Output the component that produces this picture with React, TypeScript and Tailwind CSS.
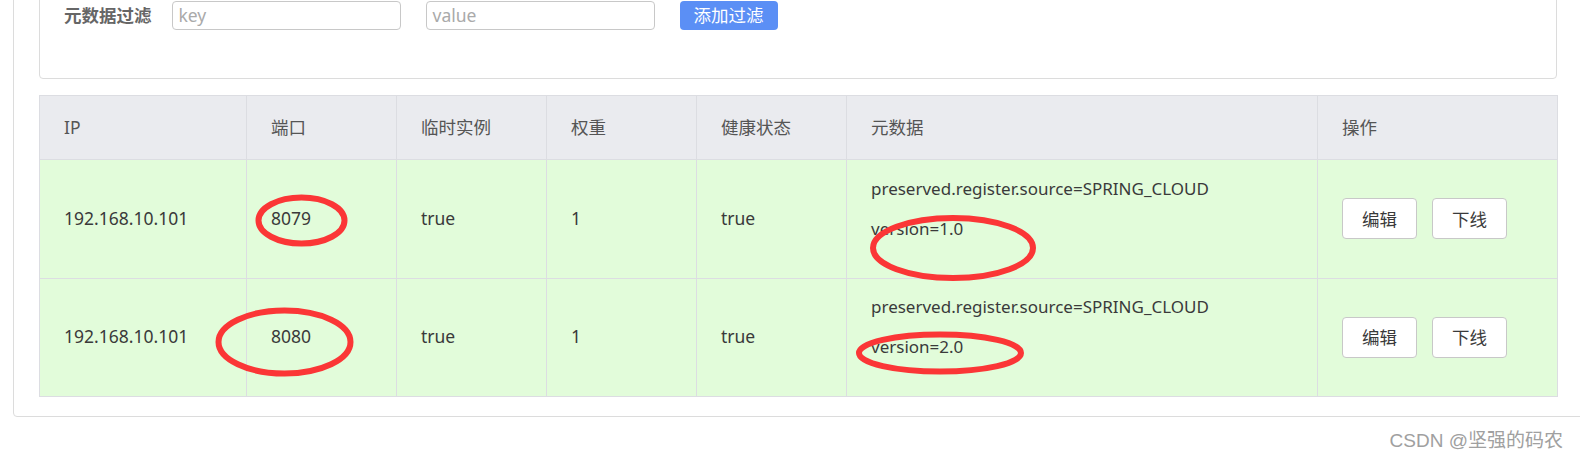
const rows = [
  { ip: "192.168.10.101", port: "8079", ephemeral: "true", weight: "1", healthy: "true", meta: ["preserved.register.source=SPRING_CLOUD", "version=1.0"] },
  { ip: "192.168.10.101", port: "8080", ephemeral: "true", weight: "1", healthy: "true", meta: ["preserved.register.source=SPRING_CLOUD", "version=2.0"] },
];

const headers = ["IP", "端口", "临时实例", "权重", "健康状态", "元数据", "操作"];
const widths = [207, 150, 150, 150, 150, 471, 240];

const Marks = () => (
  <svg className="absolute left-0 top-0 pointer-events-none" width="1580" height="458">
    <g fill="none" stroke="#fb3636" strokeWidth="6">
      <ellipse cx="301.5" cy="220.5" rx="43" ry="23" />
      <ellipse cx="953" cy="248" rx="80" ry="30" />
      <ellipse cx="284.5" cy="342" rx="66" ry="31.5" />
      <ellipse cx="940" cy="353" rx="81" ry="18.5" />
    </g>
  </svg>
);

export default function App() {
  return (
    <div
      className="relative w-[1580px] h-[458px] overflow-hidden bg-white text-[#3a3a3a]"
      style={{ fontFamily: '"Noto Sans", "Noto Sans CJK SC", sans-serif' }}
    >
      <div className="ml-[13px] mt-[-40px] w-[1600px] border border-[#dcdcdc] rounded pl-[25px] pt-[10px] pb-[19px]">
        <div className="w-[1518px] border border-[#dcdcdc] rounded pt-[29px] pb-[48px] pl-[24px]">
          <div className="flex items-center h-[29px]">
            <span className="text-[17.5px] font-bold text-[#666] leading-none">元数据过滤</span>
            <div className="ml-[20px] w-[229px] h-[29px] border border-[#c8c8c8] rounded-[4px] pl-[6px] flex items-center text-[17.5px] text-[#aaa]">
              key
            </div>
            <div className="ml-[25px] w-[229px] h-[29px] border border-[#c8c8c8] rounded-[4px] pl-[6px] flex items-center text-[17.5px] text-[#aaa]">
              value
            </div>
            <button className="ml-[25px] w-[98px] h-[29px] rounded-[4px] bg-[#5b8ff5] text-white text-[17.5px] leading-none">
              添加过滤
            </button>
          </div>
        </div>
        <table className="mt-[16px] w-[1518px] table-fixed border-collapse text-[17.5px]">
          <colgroup>
            {widths.map((w, i) => (
              <col key={i} style={{ width: w }} />
            ))}
          </colgroup>
          <thead>
            <tr className="h-[64px] bg-[#eaebef]">
              {headers.map((h) => (
                <th key={h} className="border border-[#dcdde2] pl-[24px] text-left font-normal text-[#555]">
                  {h}
                </th>
              ))}
            </tr>
          </thead>
          <tbody>
            {rows.map((r, i) => (
              <tr key={i} className="h-[118.5px] bg-[#e2fcda]">
                <td className="border border-[#dcdde2] pl-[24px] pb-[2px]">{r.ip}</td>
                <td className="border border-[#dcdde2] pl-[24px] pb-[2px]">{r.port}</td>
                <td className="border border-[#dcdde2] pl-[24px] pb-[2px]">{r.ephemeral}</td>
                <td className="border border-[#dcdde2] pl-[24px] pb-[2px]">{r.weight}</td>
                <td className="border border-[#dcdde2] pl-[24px] pb-[2px]">{r.healthy}</td>
                <td className="border border-[#dcdde2] pl-[24px] pb-[4px] text-[17px]">
                  {r.meta.map((m) => (
                    <p key={m} className="leading-[24px] mb-[16px]">{m}</p>
                  ))}
                </td>
                <td className="border border-[#dcdde2] pl-[24px]">
                  <div className="flex gap-[15px]">
                    <button className="w-[75px] h-[41px] bg-white border border-[#c8c8c8] rounded-[4px] text-[17.5px]">编辑</button>
                    <button className="w-[75px] h-[41px] bg-white border border-[#c8c8c8] rounded-[4px] text-[17.5px]">下线</button>
                  </div>
                </td>
              </tr>
            ))}
          </tbody>
        </table>
      </div>
      <div className="flex justify-end pr-[17px] mt-[12px]">
        <span className="text-[19px] leading-[24px] text-[#a0a0a0]" style={{ fontFamily: '"Liberation Sans", "Noto Sans CJK SC", sans-serif' }}>
          CSDN @坚强的码农
        </span>
      </div>
      <Marks />
    </div>
  );
}
